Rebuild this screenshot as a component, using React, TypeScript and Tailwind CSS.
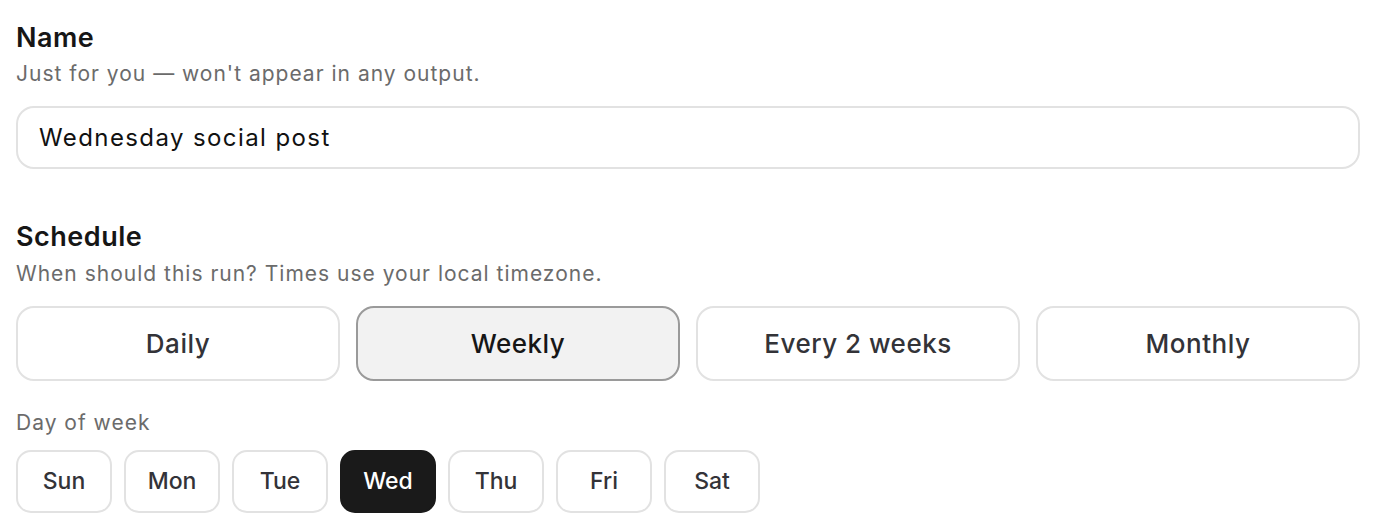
import { useState } from "react";

const frequencies = ["Daily", "Weekly", "Every 2 weeks", "Monthly"];
const days = ["Sun", "Mon", "Tue", "Wed", "Thu", "Fri", "Sat"];

export default function App() {
  const [name, setName] = useState("Wednesday social post");
  const [freq, setFreq] = useState("Weekly");
  const [day, setDay] = useState("Wed");

  return (
    <div className="min-h-screen bg-white pl-[16px] pr-[28px] pt-[20px] font-['Inter',sans-serif] text-[#111]">
      <section>
        <h2 className="text-[27px] font-semibold leading-[36px] tracking-[0.5px] text-[#161616]">Name</h2>
        <p className="mt-[4px] text-[21px] leading-[28px] tracking-[1px] text-[#6b6b6b]">
          Just for you — won't appear in any output.
        </p>
        <input
          value={name}
          onChange={(e) => setName(e.target.value)}
          className="mt-[18px] block h-[63px] w-full rounded-[18px] border-2 border-[#e2e2e2] bg-white px-[21px] text-[24px] tracking-[1.4px] text-[#111] outline-none"
        />
      </section>

      <section className="mt-[50px]">
        <h2 className="text-[27px] font-semibold leading-[36px] tracking-[0.5px] text-[#161616]">Schedule</h2>
        <p className="mt-[5px] text-[21px] leading-[28px] tracking-[1px] text-[#6b6b6b]">
          When should this run? Times use your local timezone.
        </p>
        <div className="mt-[18px] grid grid-cols-4 gap-[16px]">
          {frequencies.map((f) => (
            <button
              key={f}
              type="button"
              onClick={() => setFreq(f)}
              className={
                freq === f
                  ? "h-[75px] rounded-[18px] border-2 border-[#9a9a9a] bg-[#f2f2f2] text-[26px] font-medium tracking-[0.5px] text-[#161616]"
                  : "h-[75px] rounded-[18px] border-2 border-[#e2e2e2] bg-white text-[26px] font-medium tracking-[0.5px] text-[#333338]"
              }
            >
              {f}
            </button>
          ))}
        </div>

        <p className="mt-[28px] text-[21px] leading-[28px] tracking-[1px] text-[#6b6b6b]">Day of week</p>
        <div className="mt-[13px] flex gap-[12px]">
          {days.map((d) => (
            <button
              key={d}
              type="button"
              onClick={() => setDay(d)}
              className={
                day === d
                  ? "h-[63px] w-[96px] rounded-[15px] border-2 border-[#1a1a1a] bg-[#1a1a1a] text-[23px] font-medium text-white"
                  : "h-[63px] w-[96px] rounded-[15px] border-2 border-[#e2e2e2] bg-white text-[23px] font-medium text-[#333338]"
              }
            >
              {d}
            </button>
          ))}
        </div>
      </section>
    </div>
  );
}
